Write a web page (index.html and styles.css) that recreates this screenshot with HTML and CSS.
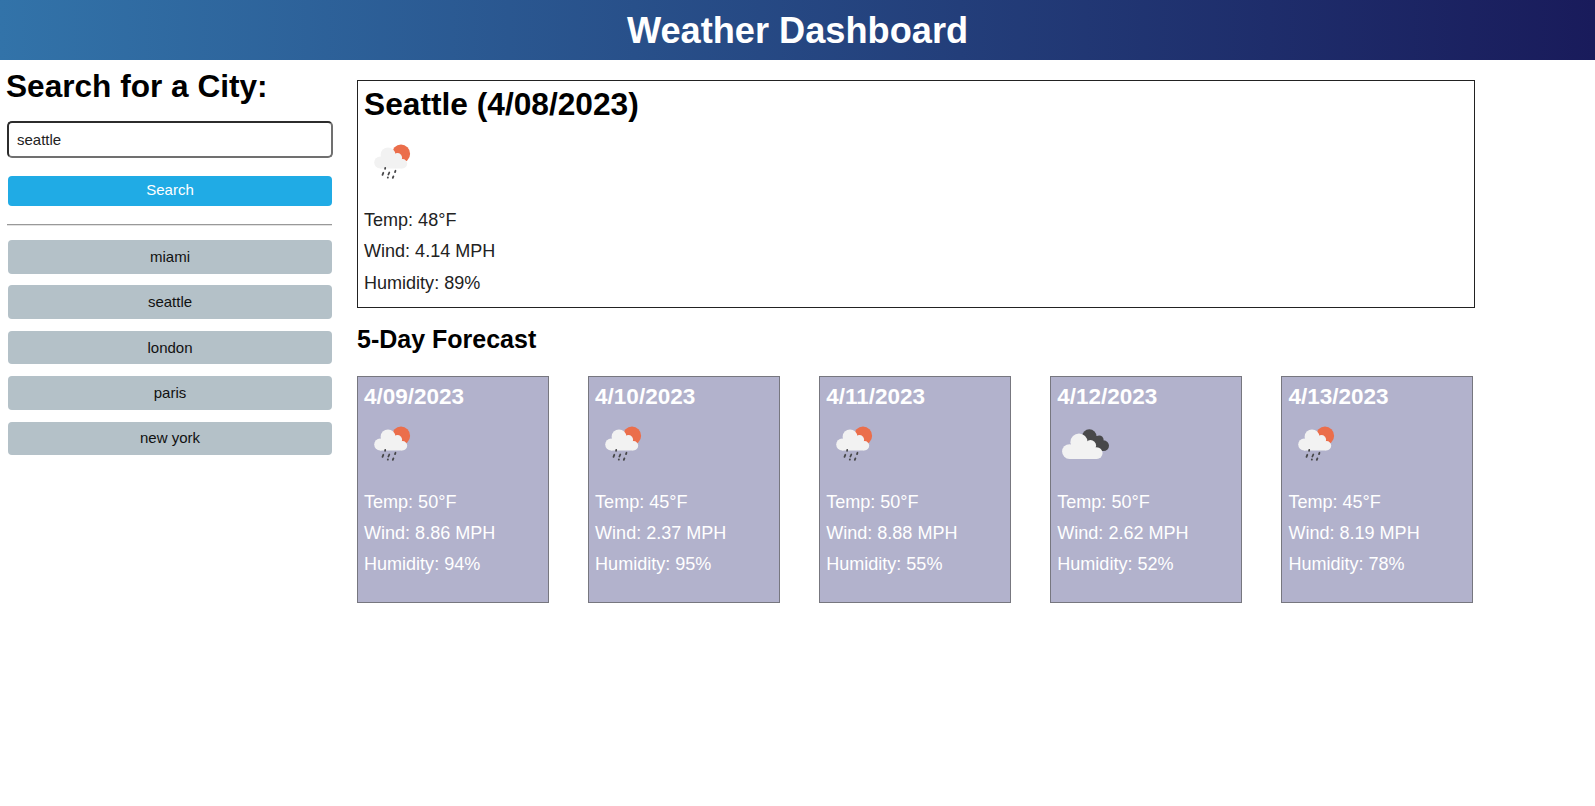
FILE: index.html
```
<!DOCTYPE html>
<html lang="en">
<head>
<meta charset="utf-8">
<title>Weather Dashboard</title>
<link rel="stylesheet" href="styles.css">
</head>
<body>
<svg class="defs" width="0" height="0">
  <symbol id="rain" viewBox="0 0 54 50" overflow="visible">
    <circle cx="37" cy="17.700" r="9.100" fill="#eb6e4b"/>
    <g fill="#f2f2f2">
      <circle cx="16.200" cy="26.400" r="6"/>
      <circle cx="24" cy="18.800" r="7.400"/>
      <circle cx="33.500" cy="21.700" r="4.600"/>
      <circle cx="38.500" cy="27.700" r="4.700"/>
      <path d="M16 21h17l5 5v6.400H16z"/>
    </g>
    <path stroke="#48484a" stroke-width="1.800" stroke-linecap="round" d="M21.200 32l-.1.800M19.300 36.800l-.8 2M25.300 36.500l-.9 2M31.500 34.800l-.5 1.300M23.900 41.300l-.1.400M29.400 40.400l-.6 1.500"/>
  </symbol>
  <symbol id="clouds" viewBox="0 0 54 50" overflow="visible">
    <g fill="#48484a">
      <circle cx="32.300" cy="18.600" r="7.300"/>
      <circle cx="42.300" cy="21.700" r="4.300"/>
      <circle cx="46.600" cy="27.700" r="5.400"/>
      <path d="M33 18h8l5 5v10h-6z"/>
    </g>
    <g fill="#f2f2f2">
      <circle cx="12.500" cy="33.600" r="7.400"/>
      <circle cx="22" cy="24.200" r="8.600"/>
      <circle cx="33.500" cy="27.600" r="5.600"/>
      <circle cx="39.700" cy="35.100" r="5.900"/>
      <path d="M12.500 27H34l5.700 5v9H12.500z"/>
    </g>
  </symbol>
</svg>
<header class="banner"><h1>Weather Dashboard</h1></header>
<div class="layout">
  <aside class="sidebar">
    <h2>Search for a City:</h2>
    <input class="city" type="text" value="seattle">
    <button class="search">Search</button>
    <hr>
    <div class="history">
      <button>miami</button>
      <button>seattle</button>
      <button>london</button>
      <button>paris</button>
      <button>new york</button>
    </div>
  </aside>
  <main class="results">
    <section class="today">
      <h2>Seattle (4/08/2023)</h2>
      <svg class="icon"><use href="#rain"/></svg>
      <p>Temp: 48°F</p><p>Wind: 4.14 MPH</p><p>Humidity: 89%</p>
    </section>
    <h3>5-Day Forecast</h3>
    <section class="forecast">
      <article class="card"><h4>4/09/2023</h4><svg class="icon"><use href="#rain"/></svg><p>Temp: 50°F</p><p>Wind: 8.86 MPH</p><p>Humidity: 94%</p></article>
      <article class="card"><h4>4/10/2023</h4><svg class="icon"><use href="#rain"/></svg><p>Temp: 45°F</p><p>Wind: 2.37 MPH</p><p>Humidity: 95%</p></article>
      <article class="card"><h4>4/11/2023</h4><svg class="icon"><use href="#rain"/></svg><p>Temp: 50°F</p><p>Wind: 8.88 MPH</p><p>Humidity: 55%</p></article>
      <article class="card"><h4>4/12/2023</h4><svg class="icon"><use href="#clouds"/></svg><p>Temp: 50°F</p><p>Wind: 2.62 MPH</p><p>Humidity: 52%</p></article>
      <article class="card"><h4>4/13/2023</h4><svg class="icon"><use href="#rain"/></svg><p>Temp: 45°F</p><p>Wind: 8.19 MPH</p><p>Humidity: 78%</p></article>
    </section>
  </main>
</div>
</body>
</html>
```
FILE: styles.css
```
* { box-sizing: border-box; margin: 0; padding: 0; }
body { font-family: "Liberation Sans", Arial, sans-serif; background: #fff; color: #000; }
.defs { display: block; }
.banner {
  height: 60px;
  background: linear-gradient(to right, #3273a9, #191b5b);
  color: #fff;
  text-align: center;
}
.banner h1 { font-size: 36.200px; line-height: 62px; }
.layout { display: flex; }
.sidebar { width: 333px; padding-left: 7px; }
.sidebar h2 { font-size: 31.600px; line-height: 36px; margin: 8px 0 0 -1px; }
.sidebar input, .sidebar button { display: block; font-family: inherit; font-size: 15px; }
.sidebar button { border: 0; border-radius: 4px; width: 324px; margin-left: 1px; }
.sidebar .city {
  width: 326px;
  height: 37px;
  margin-top: 17px;
  padding: 0 8px;
  border: 2px solid;
  border-color: #2c2c2c #707070 #707070 #2c2c2c;
  border-radius: 5px;
  color: #222;
}
.sidebar .search { height: 30px; margin-top: 18px; padding-bottom: 3px; background: #20abe5; color: #fff; }
.sidebar hr { width: 325px; margin: 18px 0 14px; border: 0; border-top: 1px solid #999; border-bottom: 1px solid #e2e2e2; }
.history { display: grid; gap: 11.900px; }
.history button { height: 33.500px; padding-bottom: 1px; background: #b4c1c8; color: #111; }
.results { width: 1118px; margin-left: 24px; padding-top: 20px; }
.today { height: 228px; border: 1px solid #222; padding: 5px 6px; }
.today h2 { font-size: 31.700px; line-height: 36px; }
.icon { display: block; width: 54px; height: 50px; }
.today .icon { margin: 14px 0 19px; }
p { font-size: 18.050px; line-height: 31px; color: #222; }
.today p { line-height: 31.300px; }
.results h3 { font-size: 25px; line-height: 32px; margin: 15px 0 21px; }
.forecast { display: grid; grid-template-columns: repeat(5, 192px); column-gap: 39.100px; }
.card { height: 227px; border: 1px solid #77777f; padding: 7px 6px 6px; background: #b2b2cc; }
.card h4 { font-size: 22.500px; line-height: 26px; color: #fff; }
.card .icon { margin: 8px 0 19px; }
.card p { color: #fff; }
```
